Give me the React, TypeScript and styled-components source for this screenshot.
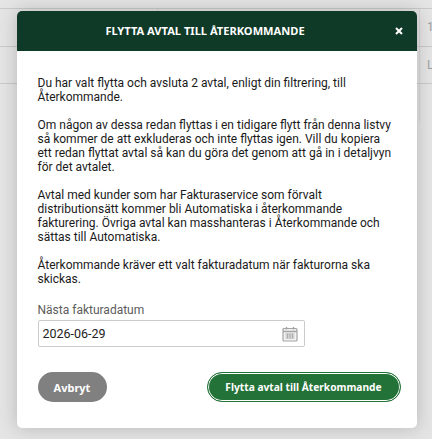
import React from 'react';
import styled, { createGlobalStyle } from 'styled-components';

const GlobalStyle = createGlobalStyle`
  html, body {
    margin: 0;
    padding: 0;
    height: 100%;
    background: #e4e4e4;
    overflow: hidden;
  }
  body {
    font-family: Roboto, "Liberation Sans", sans-serif;
  }
`;

const Page = styled.div`
  position: relative;
  width: 432px;
  height: 439px;
  overflow: hidden;
`;

const BackgroundTable = styled.div`
  display: flex;
  flex-direction: column;
  padding-top: 8px;
`;

const BackgroundRow = styled.div`
  display: grid;
  grid-template-columns: 157px 262px 1fr;
  box-sizing: border-box;
  height: 37.5px;
  border-top: 1px solid #c9c9c9;
  color: #a0a0a0;
  font-size: 12px;
`;

const BackgroundCell = styled.div`
  display: flex;
  align-items: center;
  padding-left: 7px;
  border-left: 1px solid #d6d6d6;
`;

const Backdrop = styled.div`
  position: absolute;
  inset: 0;
  display: flex;
  justify-content: center;
  align-items: flex-start;
  padding: 11px 0 0 1px;
`;

const Modal = styled.div`
  display: flex;
  flex-direction: column;
  width: 400px;
  height: 417px;
  border-radius: 5px;
  background: #fff;
  box-shadow: 0 0 18px rgba(0, 0, 0, 0.2);
  overflow: hidden;
`;

const ModalHeader = styled.header`
  position: relative;
  display: flex;
  justify-content: center;
  align-items: center;
  box-sizing: border-box;
  height: 40px;
  flex: none;
  padding: 0 23px 2px 0;
  background: #0f3a27;
  color: #fff;
`;

const ModalTitle = styled.h2`
  margin: 0;
  font-family: "Noto Sans", sans-serif;
  font-size: 11.1px;
  font-weight: 700;
`;

const CloseButton = styled.button`
  position: absolute;
  top: 16px;
  right: 14px;
  display: flex;
  padding: 0;
  border: 0;
  background: none;
  color: #fff;
`;

const ModalBody = styled.div`
  display: flex;
  flex: 1;
  flex-direction: column;
  padding: 25px 21px 26px;
`;

const Paragraph = styled.p`
  margin: 0 0 14px;
  color: #1a1a1a;
  font-size: 12px;
  line-height: 14px;
`;

const DateField = styled.label`
  display: flex;
  flex-direction: column;
  gap: 3px;
  margin-top: 3px;
  width: 267px;
`;

const FieldLabel = styled.span`
  color: #5c5c5c;
  font-size: 12px;
  line-height: 14px;
`;

const InputBox = styled.div`
  display: flex;
  justify-content: space-between;
  align-items: center;
  box-sizing: border-box;
  height: 27px;
  padding: 0 6px 0 4px;
  border: 1px solid #cbcbcb;
  border-radius: 2px;
`;

const DateInput = styled.input`
  width: 180px;
  padding: 0;
  border: 0;
  outline: 0;
  color: #222;
  font-family: Roboto, sans-serif;
  font-size: 12.5px;
`;

const Actions = styled.div`
  display: flex;
  justify-content: space-between;
  align-items: center;
  margin-top: auto;
`;

const CancelButton = styled.button`
  width: 69px;
  height: 30px;
  padding: 0;
  border: 0;
  border-radius: 15px;
  background: #808080;
  color: #fff;
  font-family: "Noto Sans", sans-serif;
  font-size: 11px;
  font-weight: 700;
`;

const ConfirmButton = styled.button`
  box-sizing: border-box;
  width: 194px;
  height: 30px;
  margin: -1px -5px 0 0;
  padding: 0;
  border: 1px solid #237238;
  border-radius: 15px;
  background: #237238;
  box-shadow: inset 0 0 0 1px #fff;
  color: #fff;
  font-family: "Noto Sans", sans-serif;
  font-size: 10.2px;
  font-weight: 700;
`;

const CalendarIcon = () => (
  <svg width="16" height="16" viewBox="0 0 16 16" fill="none" stroke="#a3a3a3">
    <rect x="1" y="2.5" width="14" height="12.5" rx="1" strokeWidth="1.2" fill="#f2f2f2" />
    <path d="M1 5.5h14" strokeWidth="1.6" />
    <path d="M4.5 1v2.5M11.5 1v2.5" strokeWidth="1.4" />
    <path d="M3.5 8h9M3.5 10h9M3.5 12h9M5.5 7.5v5M8 7.5v5M10.5 7.5v5" strokeWidth="0.8" />
  </svg>
);

const CloseIcon = () => (
  <svg width="8" height="8" viewBox="0 0 8 8" stroke="currentColor" strokeWidth="2">
    <path d="M1 1l6 6M7 1l-6 6" />
  </svg>
);

const paragraphs = [
  'Du har valt flytta och avsluta 2 avtal, enligt din filtrering, till Återkommande.',
  'Om någon av dessa redan flyttas i en tidigare flytt från denna listvy så kommer de att exkluderas och inte flyttas igen. Vill du kopiera ett redan flyttat avtal så kan du göra det genom att gå in i detaljvyn för det avtalet.',
  'Avtal med kunder som har Fakturaservice som förvalt distributionsätt kommer bli Automatiska i återkommande fakturering. Övriga avtal kan masshanteras i Återkommande och sättas till Automatiska.',
  'Återkommande kräver ett valt fakturadatum när fakturorna ska skickas.',
];

const backgroundRows = ['1', 'L', ''];

const App = () => (
  <Page>
    <GlobalStyle />
    <BackgroundTable>
      {backgroundRows.map((text, index) => (
        <BackgroundRow key={index}>
          <span />
          <BackgroundCell />
          <BackgroundCell>{text}</BackgroundCell>
        </BackgroundRow>
      ))}
    </BackgroundTable>
    <Backdrop>
      <Modal>
        <ModalHeader>
          <ModalTitle>FLYTTA AVTAL TILL ÅTERKOMMANDE</ModalTitle>
          <CloseButton aria-label="Stäng">
            <CloseIcon />
          </CloseButton>
        </ModalHeader>
        <ModalBody>
          {paragraphs.map((text) => (
            <Paragraph key={text}>{text}</Paragraph>
          ))}
          <DateField>
            <FieldLabel>Nästa fakturadatum</FieldLabel>
            <InputBox>
              <DateInput defaultValue="2026-06-29" />
              <CalendarIcon />
            </InputBox>
          </DateField>
          <Actions>
            <CancelButton>Avbryt</CancelButton>
            <ConfirmButton>Flytta avtal till Återkommande</ConfirmButton>
          </Actions>
        </ModalBody>
      </Modal>
    </Backdrop>
  </Page>
);

export default App;
